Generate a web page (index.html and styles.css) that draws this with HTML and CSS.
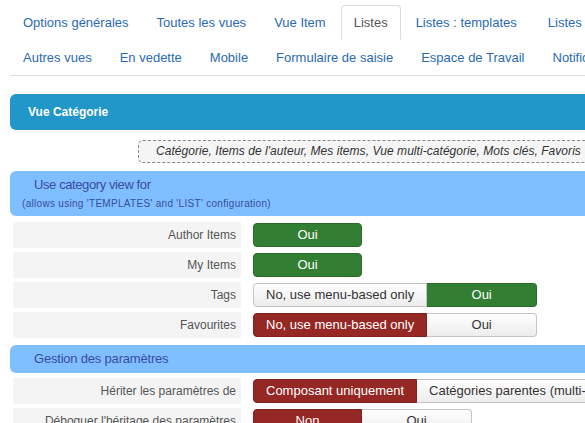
FILE: index.html
```html
<!DOCTYPE html>
<html>
<head>
<meta charset="utf-8">
<link rel="stylesheet" href="styles.css">
</head>
<body>
<div class="page">
  <div class="tabs">
    <div class="tab-row">
      <a class="tab">Options générales</a>
      <a class="tab">Toutes les vues</a>
      <a class="tab">Vue Item</a>
      <a class="tab active">Listes</a>
      <a class="tab">Listes : templates</a>
      <a class="tab tab-last">Listes : filtres</a>
    </div>
    <div class="tab-row">
      <a class="tab">Autres vues</a>
      <a class="tab">En vedette</a>
      <a class="tab">Mobile</a>
      <a class="tab">Formulaire de saisie</a>
      <a class="tab">Espace de Travail</a>
      <a class="tab">Notifications</a>
    </div>
  </div>

  <div class="panel-head">Vue Catégorie</div>

  <div class="note-wrap">
    <div class="note">Catégorie, Items de l'auteur, Mes items, Vue multi-catégorie, Mots clés, Favoris</div>
  </div>

  <div class="section section-tall">
    <div class="section-title">Use category view for</div>
    <div class="section-sub">(allows using 'TEMPLATES' and 'LIST' configuration)</div>
  </div>

  <div class="row">
    <div class="label">Author Items</div>
    <div class="btns"><span class="btn green">Oui</span></div>
  </div>
  <div class="row">
    <div class="label">My Items</div>
    <div class="btns"><span class="btn green">Oui</span></div>
  </div>
  <div class="row">
    <div class="label">Tags</div>
    <div class="btns"><span class="btn white first">No, use menu-based only</span><span class="btn green last">Oui</span></div>
  </div>
  <div class="row">
    <div class="label">Favourites</div>
    <div class="btns"><span class="btn red first">No, use menu-based only</span><span class="btn white last">Oui</span></div>
  </div>

  <div class="section section-short">
    <div class="section-title">Gestion des paramètres</div>
  </div>

  <div class="row">
    <div class="label">Hériter les paramètres de</div>
    <div class="btns"><span class="btn red first">Composant uniquement</span><span class="btn white last">Catégories parentes (multi-niveaux)</span></div>
  </div>
  <div class="row">
    <div class="label">Déboguer l'héritage des paramètres</div>
    <div class="btns"><span class="btn red first">Non</span><span class="btn white last">Oui</span></div>
  </div>
</div>
</body>
</html>
```

FILE: styles.css
```css
html, body {
  margin: 0;
  padding: 0;
  overflow: hidden;
  background: #fff;
}
body {
  font-family: "Liberation Sans", Arial, sans-serif;
  font-size: 13px;
  color: #333;
}
.page {
  width: 760px;
  padding: 5px 0 0 10px;
}
.tabs {
  border-bottom: 1px solid #ddd;
}
.tab-row {
  display: flex;
  white-space: nowrap;
}
.tab {
  display: block;
  padding: 8px 12px;
  line-height: 17px;
  border: 1px solid transparent;
  border-radius: 4px 4px 0 0;
  margin-right: 2px;
  color: #2a6ab5;
}
.tab-last {
  margin-left: 3px;
}
.tab.active {
  color: #555;
  background: #fff;
  border-color: #ddd #ddd transparent;
}
.panel-head {
  margin-top: 18px;
  height: 36px;
  line-height: 36px;
  background: #2196c8;
  color: #fff;
  font-weight: bold;
  font-size: 12px;
  padding-left: 18px;
  border-radius: 6px 0 0 6px;
}
.note-wrap {
  margin-top: 10px;
  padding-left: 128px;
  display: flex;
}
.note {
  white-space: nowrap;
  height: 21px;
  line-height: 21px;
  padding: 0 17px;
  border: 1px dashed #888;
  border-radius: 5px;
  background: #f5f5f5;
  font-style: italic;
  font-size: 12px;
  letter-spacing: 0.05px;
  color: #333;
}
.section {
  background: #7fbfff;
  border-radius: 6px 0 0 6px;
  color: #3a4c9e;
}
.section-tall {
  margin-top: 8px;
  height: 45px;
  box-sizing: border-box;
  padding-top: 6px;
}
.section-short {
  margin-top: 7px;
  height: 28px;
}
.section-title {
  padding-left: 24px;
  font-size: 13px;
  line-height: 16px;
  letter-spacing: -0.4px;
}
.section-short .section-title {
  line-height: 28px;
  letter-spacing: -0.2px;
}
.section-sub {
  padding-left: 12px;
  margin-top: 5px;
  font-size: 10px;
  letter-spacing: 0.3px;
  line-height: 12px;
}
.row {
  display: flex;
  align-items: center;
  margin-top: 4px;
  margin-left: 3px;
}
.section + .row {
  margin-top: 5px;
}
.section-tall + .row {
  margin-top: 6px;
}
.label {
  width: 223px;
  height: 26px;
  line-height: 26px;
  background: #f4f4f4;
  text-align: right;
  padding-right: 5px;
  font-size: 12px;
  color: #555;
  white-space: nowrap;
  flex-shrink: 0;
}
.btns {
  display: flex;
  margin-left: 12px;
  white-space: nowrap;
}
.btn {
  display: block;
  box-sizing: border-box;
  min-width: 109px;
  height: 24px;
  line-height: 22px;
  padding: 0 12px;
  text-align: center;
  font-size: 13px;
  border: 1px solid;
  border-radius: 4px;
}
.btn.first {
  border-radius: 4px 0 0 4px;
}
.btn.last {
  border-radius: 0 4px 4px 0;
  min-width: 110px;
  border-left-width: 0;
}
.green {
  background: #327e33;
  border-color: #2a6b2b;
  color: #fff;
}
.red {
  background: #952825;
  border-color: #7f211f;
  color: #fff;
}
.white {
  background: linear-gradient(#ffffff, #ececec);
  border-color: #c4c4c4;
  color: #333;
}
```
